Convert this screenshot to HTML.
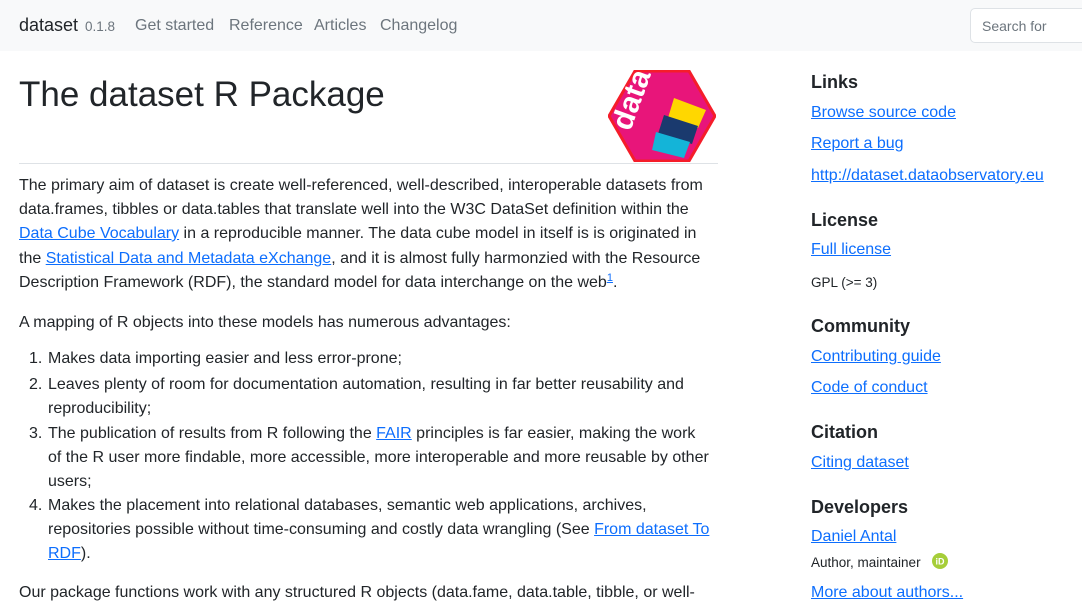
<!DOCTYPE html>
<html><head><meta charset="utf-8">
<style>
*{margin:0;padding:0;box-sizing:border-box}
body{width:1082px;height:609px;overflow:hidden;background:#fff;font-family:"Liberation Sans",sans-serif;color:#212529;position:relative}
.nav{position:absolute;left:0;top:0;width:1082px;height:51px;background:#f8f9fa}
.a{position:absolute;white-space:nowrap}
.l{position:absolute;white-space:nowrap;font-size:16px;line-height:24px;height:24px}
a{color:#0d6efd;text-decoration:underline}
.nl{color:#6c757d;font-size:16px;top:17px}
.sh{position:absolute;font-size:18px;font-weight:bold;color:#212529;left:811px}
.sl{position:absolute;left:811px;font-size:16px;white-space:nowrap}
sup{font-size:11px;line-height:0;vertical-align:6px}
</style></head><body>
<div class="nav"></div>
<div class="a" style="left:19px;top:15px;font-size:18px;color:#212529">dataset</div>
<div class="a" style="left:85px;top:19px;font-size:13.5px;color:#6c757d">0.1.8</div>
<div class="a nl" style="left:135px">Get started</div>
<div class="a nl" style="left:229px">Reference</div>
<div class="a nl" style="left:314px">Articles</div>
<div class="a nl" style="left:380px">Changelog</div>
<div class="a" style="left:970px;top:8px;width:120px;height:35px;border:1px solid #dee2e6;border-radius:5px;background:#fff;padding:9px 11px;font-size:14px;color:#6c757d">Search for</div>

<div class="a" style="left:19px;top:75px;font-size:35px;font-weight:500;color:#212529">The dataset R Package</div>
<svg class="a" style="left:608px;top:70px" width="108" height="92" viewBox="0 0 108 92">
<polygon points="27,1 81,1 107,46 81,91 27,91 1,46" fill="#e8157a" stroke="#f51d2a" stroke-width="3"/>
<polygon points="66,28 98,40 90,58 60,48" fill="#ffd700"/>
<polygon points="56,45 90,56 84,74 50,64" fill="#1a3a6e"/>
<polygon points="48,62 82,72 76,88 44,80" fill="#14b4d8"/>
<text x="22" y="62" font-family="Liberation Sans" font-weight="bold" font-size="30" fill="#fff" transform="rotate(-70 22 62)">data</text>
</svg>
<div class="a" style="left:19px;top:163px;width:699px;height:1px;background:#dee2e6"></div>

<div class="l" style="left:19px;top:174px">The primary aim of dataset is create well-referenced, well-described, interoperable datasets from</div>
<div class="l" style="left:19px;top:198px">data.frames, tibbles or data.tables that translate well into the W3C DataSet definition within the</div>
<div class="l" style="left:19px;top:222px"><a>Data Cube Vocabulary</a> in a reproducible manner. The data cube model in itself is is originated in</div>
<div class="l" style="left:19px;top:247px">the <a>Statistical Data and Metadata eXchange</a>, and it is almost fully harmonzied with the Resource</div>
<div class="l" style="left:19px;top:271px">Description Framework (RDF), the standard model for data interchange on the web<sup><a>1</a></sup>.</div>
<div class="l" style="left:19px;top:311px">A mapping of R objects into these models has numerous advantages:</div>
<div class="l" style="left:29px;top:347px">1.</div><div class="l" style="left:48px;top:347px">Makes data importing easier and less error-prone;</div>
<div class="l" style="left:29px;top:373px">2.</div><div class="l" style="left:48px;top:373px">Leaves plenty of room for documentation automation, resulting in far better reusability and</div>
<div class="l" style="left:48px;top:397px">reproducibility;</div>
<div class="l" style="left:29px;top:422px">3.</div><div class="l" style="left:48px;top:422px">The publication of results from R following the <a>FAIR</a> principles is far easier, making the work</div>
<div class="l" style="left:48px;top:446px">of the R user more findable, more accessible, more interoperable and more reusable by other</div>
<div class="l" style="left:48px;top:470px">users;</div>
<div class="l" style="left:29px;top:494px">4.</div><div class="l" style="left:48px;top:494px">Makes the placement into relational databases, semantic web applications, archives,</div>
<div class="l" style="left:48px;top:518px">repositories possible without time-consuming and costly data wrangling (See <a>From dataset To</a></div>
<div class="l" style="left:48px;top:542px"><a>RDF</a>).</div>
<div class="l" style="left:19px;top:581px">Our package functions work with any structured R objects (data.fame, data.table, tibble, or well-</div>

<div class="sh" style="top:72px">Links</div>
<div class="sl" style="top:104px"><a>Browse source code</a></div>
<div class="sl" style="top:135px"><a>Report a bug</a></div>
<div class="sl" style="top:167px"><a>http://dataset.dataobservatory.eu</a></div>
<div class="sh" style="top:210px">License</div>
<div class="sl" style="top:241px"><a>Full license</a></div>
<div class="sl" style="top:275px;font-size:13.5px">GPL (&gt;= 3)</div>
<div class="sh" style="top:316px">Community</div>
<div class="sl" style="top:348px"><a>Contributing guide</a></div>
<div class="sl" style="top:379px"><a>Code of conduct</a></div>
<div class="sh" style="top:422px">Citation</div>
<div class="sl" style="top:454px"><a>Citing dataset</a></div>
<div class="sh" style="top:497px">Developers</div>
<div class="sl" style="top:528px"><a>Daniel Antal</a></div>
<div class="sl" style="top:555px;font-size:13.5px">Author, maintainer</div>
<svg class="a" style="left:932px;top:553px" width="16" height="16" viewBox="0 0 16 16"><circle cx="8" cy="8" r="8" fill="#a6ce39"/><text x="3.5" y="11.5" font-family="Liberation Sans" font-size="9" font-weight="bold" fill="#fff">iD</text></svg>
<div class="sl" style="top:584px"><a>More about authors...</a></div>
</body></html>
